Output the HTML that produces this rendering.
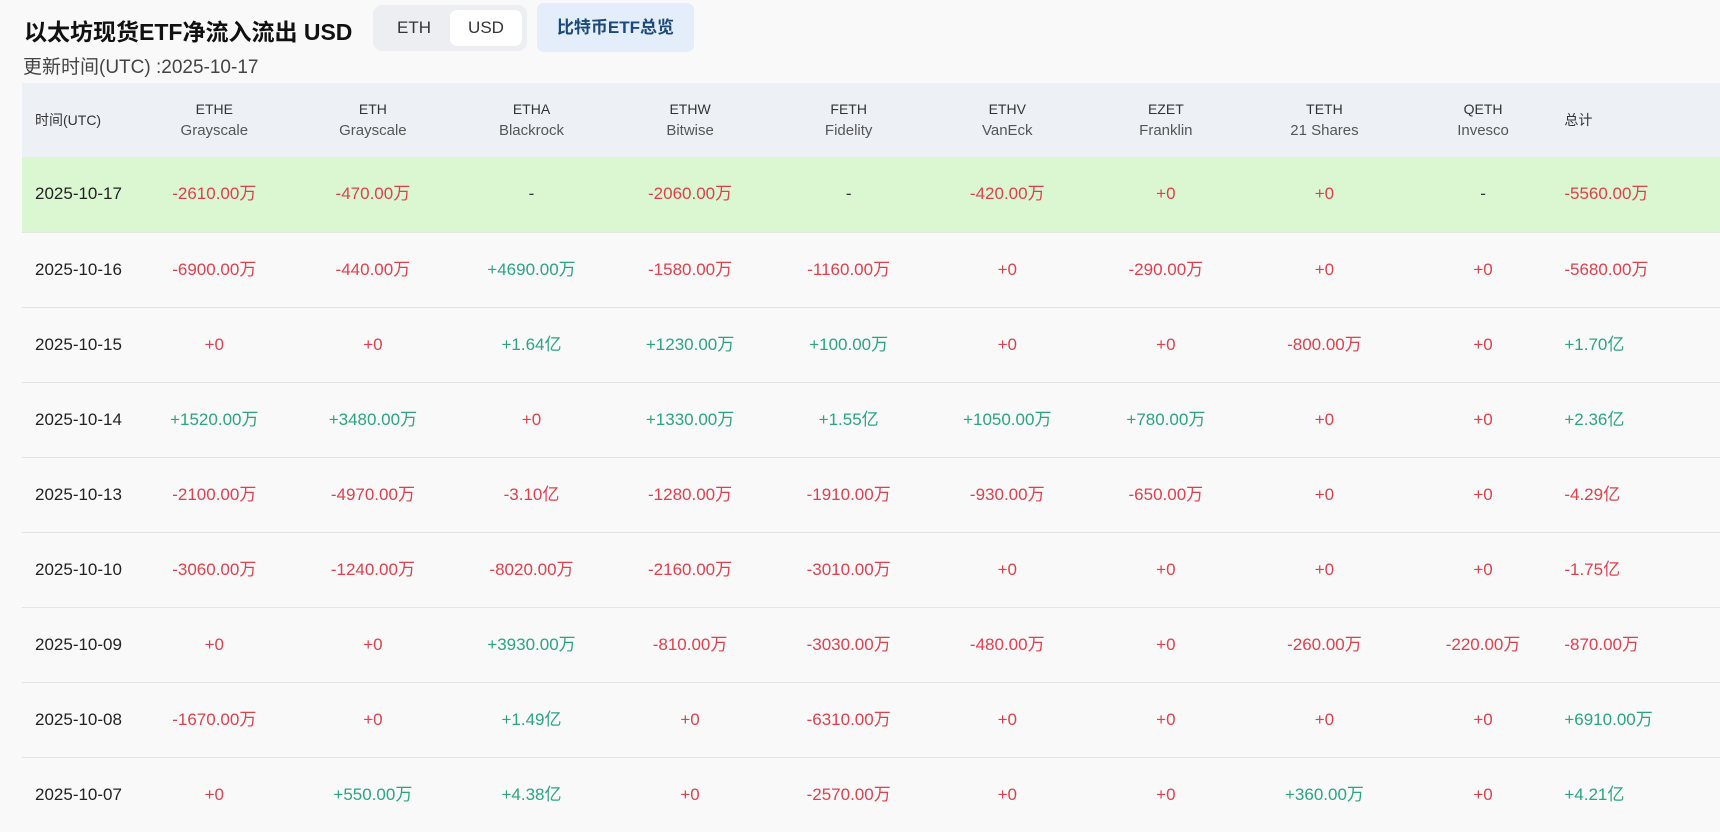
<!DOCTYPE html>
<html><head><meta charset="utf-8"><style>
*{margin:0;padding:0;box-sizing:border-box}
body{width:1720px;height:814px;overflow:hidden;background:#f9f9f9;font-family:"Liberation Sans","Noto Sans CJK SC",sans-serif;color:#222;position:relative}
.title{position:absolute;left:24px;top:17px;font-size:23px;line-height:30px;font-weight:bold;color:#111;white-space:nowrap}
.tog{position:absolute;left:373px;top:5px;width:154px;height:46px;background:#eceef1;border-radius:9px}
.tog span{position:absolute;top:5px;height:36px;line-height:36px;font-size:17px;color:#333;text-align:center}
.tog .a{left:5px;width:72px}
.tog .b{left:77px;width:72px;background:#fff;border-radius:7px}
.btn{position:absolute;left:537px;top:3px;width:157px;height:49px;background:#e3eefa;border-radius:7px;color:#1b4a7a;font-weight:bold;font-size:17px;line-height:49px;text-align:center}
.upd{position:absolute;left:23px;top:56px;font-size:19px;line-height:24px;color:#444}
table{position:absolute;left:22px;top:83px;width:1698px;border-collapse:collapse;table-layout:fixed}
th{background:#edf1f5;height:74px;font-weight:normal;font-size:14px;color:#333;line-height:22px}
th small{display:block;font-size:15px;line-height:22px;color:#555}
td{height:75px;text-align:center;font-size:17px;line-height:20px;border-top:1px solid #e4e4e4;vertical-align:middle}
td:first-child,th:first-child{text-align:left;padding-left:13px}
td:last-child,th:last-child{text-align:left;padding-left:2px}
tr.g td{background:#dbf7d2;border-top:none}
.r{color:#e0404c}.n{color:#2aa57f}.d{color:#333}
</style></head><body>
<div class="title">以太坊现货ETF净流入流出 USD</div>
<div class="tog"><span class="a">ETH</span><span class="b">USD</span></div>
<div class="btn">比特币ETF总览</div>
<div class="upd">更新时间(UTC) :2025-10-17</div>
<table>
<colgroup><col style="width:113px"><col span="9" style="width:158.6px"><col></colgroup>
<tr><th>时间(UTC)</th><th>ETHE<small>Grayscale</small></th><th>ETH<small>Grayscale</small></th><th>ETHA<small>Blackrock</small></th><th>ETHW<small>Bitwise</small></th><th>FETH<small>Fidelity</small></th><th>ETHV<small>VanEck</small></th><th>EZET<small>Franklin</small></th><th>TETH<small>21 Shares</small></th><th>QETH<small>Invesco</small></th><th>总计</th></tr>
<tr class="g"><td>2025-10-17</td><td class="r">-2610.00万</td><td class="r">-470.00万</td><td class="d">-</td><td class="r">-2060.00万</td><td class="d">-</td><td class="r">-420.00万</td><td class="r">+0</td><td class="r">+0</td><td class="d">-</td><td class="r">-5560.00万</td></tr>
<tr><td>2025-10-16</td><td class="r">-6900.00万</td><td class="r">-440.00万</td><td class="n">+4690.00万</td><td class="r">-1580.00万</td><td class="r">-1160.00万</td><td class="r">+0</td><td class="r">-290.00万</td><td class="r">+0</td><td class="r">+0</td><td class="r">-5680.00万</td></tr>
<tr><td>2025-10-15</td><td class="r">+0</td><td class="r">+0</td><td class="n">+1.64亿</td><td class="n">+1230.00万</td><td class="n">+100.00万</td><td class="r">+0</td><td class="r">+0</td><td class="r">-800.00万</td><td class="r">+0</td><td class="n">+1.70亿</td></tr>
<tr><td>2025-10-14</td><td class="n">+1520.00万</td><td class="n">+3480.00万</td><td class="r">+0</td><td class="n">+1330.00万</td><td class="n">+1.55亿</td><td class="n">+1050.00万</td><td class="n">+780.00万</td><td class="r">+0</td><td class="r">+0</td><td class="n">+2.36亿</td></tr>
<tr><td>2025-10-13</td><td class="r">-2100.00万</td><td class="r">-4970.00万</td><td class="r">-3.10亿</td><td class="r">-1280.00万</td><td class="r">-1910.00万</td><td class="r">-930.00万</td><td class="r">-650.00万</td><td class="r">+0</td><td class="r">+0</td><td class="r">-4.29亿</td></tr>
<tr><td>2025-10-10</td><td class="r">-3060.00万</td><td class="r">-1240.00万</td><td class="r">-8020.00万</td><td class="r">-2160.00万</td><td class="r">-3010.00万</td><td class="r">+0</td><td class="r">+0</td><td class="r">+0</td><td class="r">+0</td><td class="r">-1.75亿</td></tr>
<tr><td>2025-10-09</td><td class="r">+0</td><td class="r">+0</td><td class="n">+3930.00万</td><td class="r">-810.00万</td><td class="r">-3030.00万</td><td class="r">-480.00万</td><td class="r">+0</td><td class="r">-260.00万</td><td class="r">-220.00万</td><td class="r">-870.00万</td></tr>
<tr><td>2025-10-08</td><td class="r">-1670.00万</td><td class="r">+0</td><td class="n">+1.49亿</td><td class="r">+0</td><td class="r">-6310.00万</td><td class="r">+0</td><td class="r">+0</td><td class="r">+0</td><td class="r">+0</td><td class="n">+6910.00万</td></tr>
<tr><td>2025-10-07</td><td class="r">+0</td><td class="n">+550.00万</td><td class="n">+4.38亿</td><td class="r">+0</td><td class="r">-2570.00万</td><td class="r">+0</td><td class="r">+0</td><td class="n">+360.00万</td><td class="r">+0</td><td class="n">+4.21亿</td></tr>
</table>
</body></html>
